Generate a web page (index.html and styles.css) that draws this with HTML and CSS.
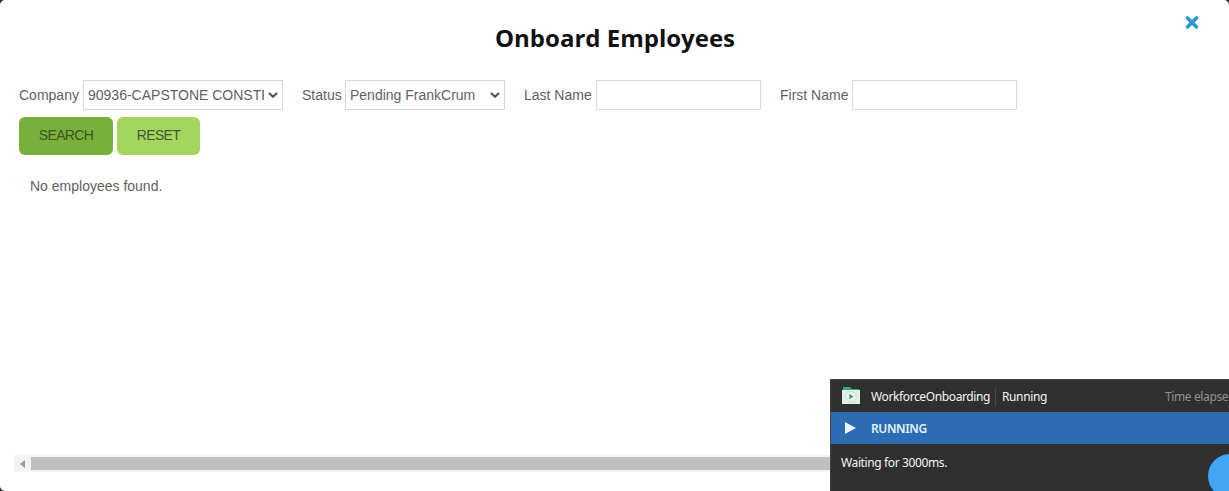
FILE: index.html
```html
<!DOCTYPE html>
<html lang="en">
<head>
<meta charset="utf-8">
<title>Onboard Employees</title>
<link rel="stylesheet" href="styles.css">
</head>
<body>
<main class="dialog">
  <header class="dialog-header">
    <h1 class="title">Onboard Employees</h1>
    <button class="close" aria-label="Close"><svg width="16" height="16" viewBox="0 0 16 16"><path d="M3.5 3L12.5 12M12.5 3L3.5 12" stroke="#2b95d6" stroke-width="3.6" stroke-linecap="round"/></svg></button>
  </header>
  <form class="filters">
    <div class="field company">
      <span class="label">Company</span>
      <div class="select"><span class="value">90936-CAPSTONE CONSTR</span><svg class="chevron" width="10" height="6" viewBox="0 0 10 6"><path d="M1 1L5 4.8L9 1" fill="none" stroke="#505050" stroke-width="2"/></svg></div>
    </div>
    <div class="field status">
      <span class="label">Status</span>
      <div class="select"><span class="value">Pending FrankCrum</span><svg class="chevron" width="10" height="6" viewBox="0 0 10 6"><path d="M1 1L5 4.8L9 1" fill="none" stroke="#505050" stroke-width="2"/></svg></div>
    </div>
    <label class="field last"><span class="label">Last Name</span><input class="input" type="text"></label>
    <label class="field first"><span class="label">First Name</span><input class="input" type="text"></label>
  </form>
  <div class="actions">
    <button class="btn search">SEARCH</button>
    <button class="btn reset">RESET</button>
  </div>
  <p class="empty">No employees found.</p>
  <div class="scrollbar">
    <span class="scroll-arrow"><svg width="5" height="8" viewBox="0 0 5 8"><path d="M5 0V8L0 4Z" fill="#9a9a9a"/></svg></span>
    <span class="scroll-thumb"></span>
  </div>
</main>
<aside class="runner">
  <div class="runner-head">
    <svg class="runner-icon" width="18" height="18" viewBox="0 0 18 18"><path d="M1 0H8L10 2H17V5H1Z" fill="#37a873"/><path d="M0 3H18V17H0Z" fill="#d9f3e5"/><circle cx="9" cy="9.5" r="5.4" fill="#f1eeea" stroke="#c9d8cd" stroke-width=".8"/><path d="M7.3 6.7L11.6 9.5L7.3 12.3Z" fill="#2fa66d"/></svg>
    <span class="runner-name">WorkforceOnboarding</span>
    <span class="runner-state">Running</span>
    <span class="elapsed">Time elapse</span>
  </div>
  <div class="runner-bar">
    <svg class="play" width="11" height="12" viewBox="0 0 11 12"><path d="M0 0L11 6L0 12Z" fill="#eaf3ff"/></svg>
    <span class="running">RUNNING</span>
  </div>
  <p class="message">Waiting for 3000ms.</p>
  <span class="bubble"></span>
</aside>
</body>
</html>
```
FILE: styles.css
```css
* { box-sizing: border-box; }
body {
  margin: 0;
  width: 1229px;
  height: 491px;
  overflow: hidden;
  background: #222;
  color: #5f5f5f;
  font: 14px/18px "Liberation Sans", Arial, sans-serif;
}
.dialog {
  display: flex;
  flex-direction: column;
  height: 491px;
  background: #fff;
  border-radius: 5px;
}
.dialog-header {
  position: relative;
  height: 80px;
  padding: 22px 0 0 1px;
}
.title {
  margin: 0;
  color: #111;
  text-align: center;
  font: 700 24px/32px "Open Sans", sans-serif;
}
.close {
  position: absolute;
  top: 15px;
  right: 29px;
  width: 16px;
  height: 16px;
  padding: 0;
  border: 0;
  background: none;
}
.close svg { display: block; }
.filters {
  display: flex;
  height: 37px;
  padding-left: 19px;
}
.field {
  display: flex;
  align-items: center;
  justify-content: space-between;
  height: 30px;
  white-space: nowrap;
}
.company { width: 264px; margin-right: 19px; }
.status { width: 203px; margin-right: 19px; }
.last { width: 237px; margin-right: 19px; }
.first { width: 237px; }
.select {
  display: flex;
  align-items: center;
  height: 30px;
  padding: 0 4px;
  border: 1px solid #d4d7d7;
  background: #fff;
}
.company .select { width: 200px; }
.status .select { width: 160px; }
.value { flex: 1; overflow: hidden; }
.company .value { margin-right: 4px; }
.input {
  width: 165px;
  height: 30px;
  border: 1px solid #d8dada;
  background: #fff;
}
.actions {
  display: flex;
  gap: 4px;
  padding-left: 19px;
}
.btn {
  height: 38px;
  padding: 0 0 2px;
  border: 0;
  border-radius: 6px;
  color: #46543a;
  font: 14px/18px "Liberation Sans", Arial, sans-serif;
  letter-spacing: -.65px;
}
.search { width: 94px; background: #79b03b; color: #3d5522; }
.reset { width: 83px; background: #a3d65c; }
.empty { margin: 22px 0 0 30px; }
.scrollbar {
  display: flex;
  height: 17px;
  margin: auto 0 19px 14px;
  padding: 2px 0;
  background: #f3f3f3;
}
.scroll-arrow { display: flex; align-items: center; width: 17px; padding-left: 6px; }
.scroll-thumb { flex: 1; background: #bfbfbf; }
.runner {
  position: absolute;
  left: 830px;
  top: 379px;
  width: 399px;
  height: 112px;
  overflow: hidden;
  background: #2f2f2f;
  border: solid #454545;
  border-width: 1px 0 0 1px;
  color: #f4f4f4;
  font: 12px/18px "Noto Sans", sans-serif;
  letter-spacing: -.38px;
}
.runner-head {
  display: flex;
  align-items: center;
  height: 32px;
  padding: 1px 0 0 11px;
  white-space: nowrap;
}
.runner-head > * { flex-shrink: 0; }
.runner-icon { margin: -1px 11px 0 0; }
.runner-name { width: 124px; }
.runner-state {
  width: 170px;
  padding-left: 6px;
  border-left: 1px solid #484848;
}
.elapsed { color: #929292; }
.runner-bar {
  display: flex;
  align-items: center;
  height: 32px;
  padding-left: 14px;
  background: #2b6cb2;
}
.play { margin-right: 15px; }
.running { padding-top: 2px; color: #e5f0ff; font-weight: 600; }
.message { margin: 10px 0 0 10px; }
.bubble {
  position: absolute;
  left: 377px;
  top: 74px;
  width: 44px;
  height: 44px;
  border-radius: 50%;
  background: #42a5f5;
}
```
